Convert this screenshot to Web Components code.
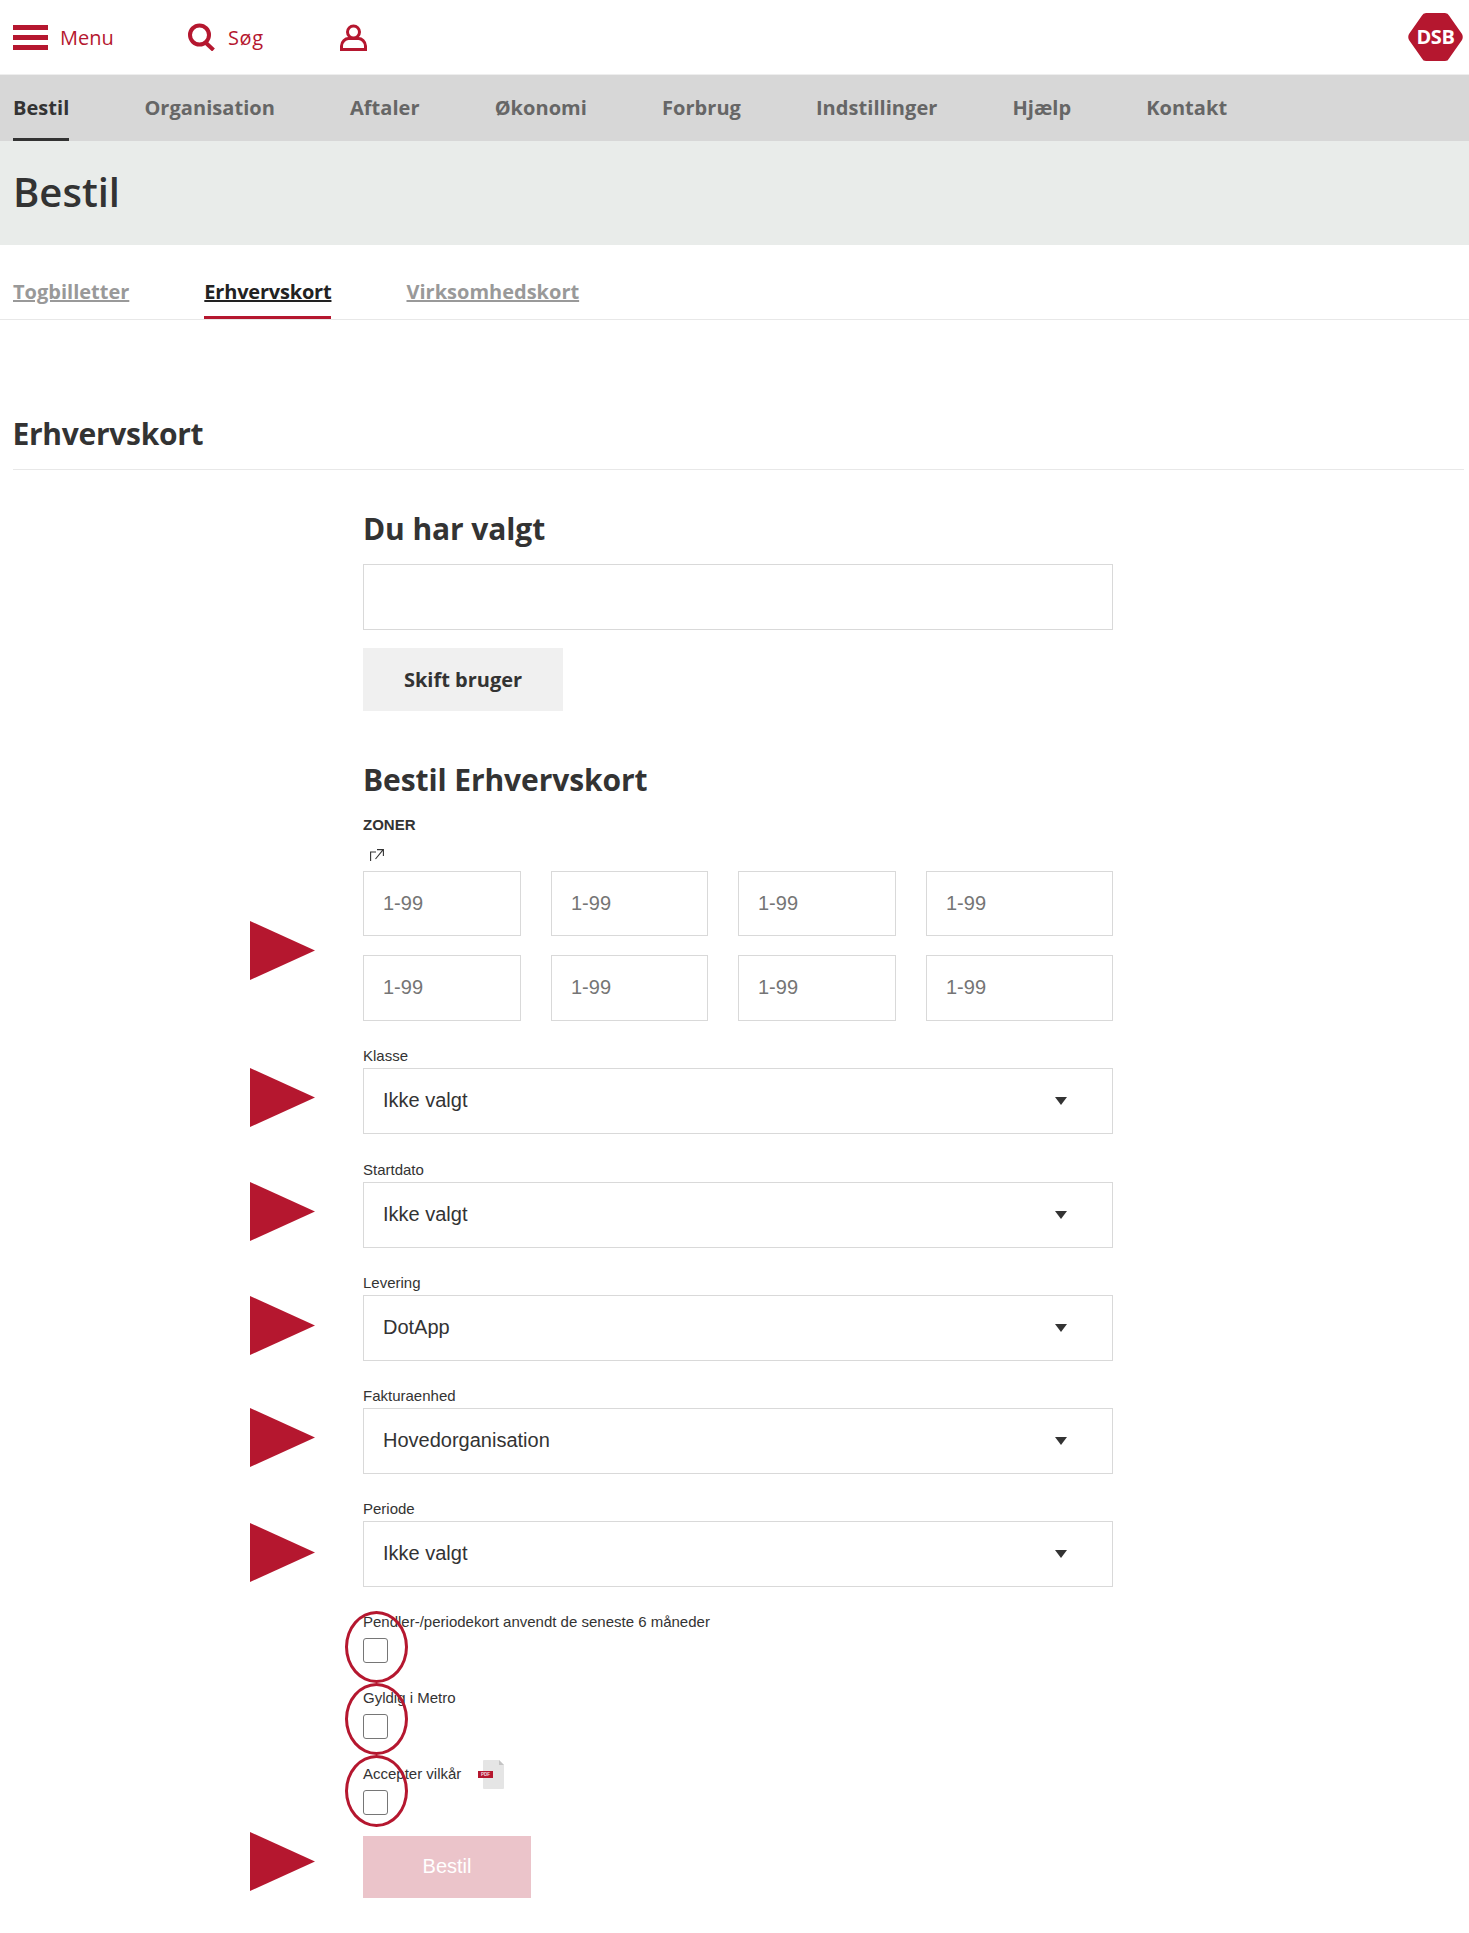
<!DOCTYPE html>
<html lang="da">
<head>
<meta charset="utf-8">
<title>Bestil</title>
<style>
  html, body { margin: 0; background: #fff; }
  body { font-family: "Liberation Sans", Arial, sans-serif; color: #333; }
</style>
</head>
<body>
<dsb-topbar></dsb-topbar>
<dsb-nav items="Bestil,Organisation,Aftaler,Økonomi,Forbrug,Indstillinger,Hjælp,Kontakt" active="Bestil"></dsb-nav>
<dsb-band>Bestil</dsb-band>
<dsb-tabs items="Togbilletter,Erhvervskort,Virksomhedskort" active="Erhvervskort"></dsb-tabs>
<dsb-order-page></dsb-order-page>

<script>
const HEADING_FONT = '"Open Sans", "Noto Sans", sans-serif';
const RED = '#b5172f';

class DsbTopbar extends HTMLElement {
  constructor() {
    super();
    this._root = this.attachShadow({mode: 'open'});
    this._root.innerHTML = `
      <style>
        :host { display: flex; align-items: center; height: 74px; padding: 0 6px 0 13px; color: ${RED}; font: 400 20px ${HEADING_FONT}; }
        .item { display: flex; align-items: center; }
        .menu { gap: 12px; width: 175px; }
        .search { gap: 13px; width: 153px; letter-spacing: .6px; }
        svg { display: block; }
        .user { margin-left: -1px; }
        .logo { margin-left: auto; margin-top: -1px; position: relative; width: 55px; height: 48px; }
        .logo span { position: absolute; inset: 0; display: flex; align-items: center; justify-content: center; color: #fff; font-weight: 700; font-size: 20px; letter-spacing: -.4px; }
      </style>
      <div class="item menu">
        <svg width="35" height="25" viewBox="0 0 35 25" fill="${RED}">
          <rect width="35" height="5"/><rect y="10" width="35" height="5"/><rect y="20" width="35" height="5"/>
        </svg>
        <span>Menu</span>
      </div>
      <div class="item search">
        <svg width="27" height="28" viewBox="0 0 27 28" fill="none" stroke="${RED}" stroke-width="4">
          <circle cx="11.5" cy="12" r="9.5"/><path d="M17.5 19.5 25.5 27"/>
        </svg>
        <span>Søg</span>
      </div>
      <svg class="user" width="27" height="27" viewBox="0 0 27 27" fill="none" stroke="${RED}" stroke-width="3">
        <circle cx="13.5" cy="8" r="6"/>
        <path d="M1.5 25.5v-3.500c0-4.500 4-7.500 7-7.500h10c3 0 7 3 7 7.500v3.500z"/>
      </svg>
      <div class="logo">
        <svg width="55" height="48" viewBox="0 0 55 48">
          <path d="M14 2.500Q15 0 18 0H37Q40 0 41 2.500L54 21Q55.500 24 54 27L41 45.500Q40 48 37 48H18Q15 48 14 45.500L1 27Q-.5 24 1 21z" fill="${RED}"/>
        </svg>
        <span>DSB</span>
      </div>
    `;
  }
}

class DsbNav extends HTMLElement {
  constructor() {
    super();
    const items = this.getAttribute('items').split(',');
    const active = this.getAttribute('active');
    this._root = this.attachShadow({mode: 'open'});
    this._root.innerHTML = `
      <style>
        :host { display: flex; gap: 75px; height: 66px; padding-left: 13px; background: #d7d7d7; border-top: 1px solid #eee; font: 700 20px ${HEADING_FONT}; letter-spacing: .05px; color: #666; }
        a { display: flex; align-items: center; box-sizing: border-box; height: 66px; padding-top: 1px; border-bottom: 3px solid transparent; }
        a.on { color: #333; border-bottom-color: #333; }
      </style>
      ${items.map(i => `<a class="${i === active ? 'on' : ''}">${i}</a>`).join('')}
    `;
  }
}

class DsbBand extends HTMLElement {
  constructor() {
    super();
    this._root = this.attachShadow({mode: 'open'});
    this._root.innerHTML = `
      <style>
        :host { display: flex; align-items: center; height: 104px; padding: 0 13px 4px; box-sizing: border-box; background: #e9ecea; color: #333; font: 600 40px ${HEADING_FONT}; }
      </style>
      <slot></slot>
    `;
  }
}

class DsbTabs extends HTMLElement {
  constructor() {
    super();
    const items = this.getAttribute('items').split(',');
    const active = this.getAttribute('active');
    this._root = this.attachShadow({mode: 'open'});
    this._root.innerHTML = `
      <style>
        :host { display: flex; gap: 75px; height: 75px; box-sizing: border-box; padding-left: 13px; border-bottom: 1px solid #e8e8e8; font: 700 20px ${HEADING_FONT}; color: #999; }
        a { display: flex; align-items: center; box-sizing: border-box; height: 74px; padding-top: 22px; text-decoration: underline; border-bottom: 3px solid transparent; }
        a.on { color: #222; letter-spacing: -.2px; border-bottom-color: ${RED}; }
      </style>
      ${items.map(i => `<a class="${i === active ? 'on' : ''}">${i}</a>`).join('')}
    `;
  }
}

// red triangle the screenshot's author drew next to a row
class DsbMarker extends HTMLElement {
  constructor() {
    super();
    this._root = this.attachShadow({mode: 'open'});
    this._root.innerHTML = `
      <style>
        :host { position: absolute; left: -113px; top: var(--top, 0); width: 65px; height: 59px; }
        svg { display: block; }
      </style>
      <svg width="65" height="59" viewBox="0 0 65 59"><path d="M0 0 65 29.500 0 59z" fill="${RED}"/></svg>
    `;
  }
}

class DsbZone extends HTMLElement {
  constructor() {
    super();
    this._root = this.attachShadow({mode: 'open'});
    this._root.innerHTML = `
      <style>
        :host { display: flex; align-items: center; box-sizing: border-box; padding: 0 0 1px 19px; border: 1.5px solid #d9d9d9; color: #757575; font-size: 20px; }
      </style>
      <slot></slot>
    `;
  }
}

class DsbSelect extends HTMLElement {
  constructor() {
    super();
    this._root = this.attachShadow({mode: 'open'});
    this._root.innerHTML = `
      <style>
        :host { display: block; position: relative; margin-bottom: 27px; }
        :host([first]) { margin-bottom: 28px; }
        label { display: block; height: 20px; font-size: 15px; line-height: 15px; }
        .box { display: flex; align-items: center; justify-content: space-between; box-sizing: border-box; height: 66px; padding: 0 45px 1px 19px; border: 1.5px solid #d9d9d9; font-size: 20px; }
        .arrow { width: 0; height: 0; border: 6.500px solid transparent; border-top: 8px solid #333; border-bottom: 0; }
      </style>
      <label>${this.getAttribute('label')}</label>
      <div class="box"><span>${this.getAttribute('value')}</span><i class="arrow"></i></div>
      <slot></slot>
    `;
  }
}

class DsbCheck extends HTMLElement {
  constructor() {
    super();
    this._root = this.attachShadow({mode: 'open'});
    this._root.innerHTML = `
      <style>
        :host { display: block; position: relative; margin-bottom: 28px; }
        label { display: block; height: 24px; font-size: 15px; line-height: 16px; }
        .box { box-sizing: border-box; width: 25px; height: 25px; margin-bottom: -1px; border: 1.5px solid #767676; border-radius: 3px; background: #fff; }
        .ring { position: absolute; left: -18px; top: var(--ring-top, -3px); box-sizing: border-box; width: 63px; height: 72px; border: 3.5px solid ${RED}; border-radius: 50%; }
        slot { display: inline-block; }
      </style>
      <label>${this.getAttribute('label')}<slot></slot></label>
      <div class="box"></div>
      <div class="ring"></div>
    `;
  }
}

class DsbPdfIcon extends HTMLElement {
  constructor() {
    super();
    this._root = this.attachShadow({mode: 'open'});
    this._root.innerHTML = `
      <style>
        :host { position: absolute; left: 115px; top: -6px; width: 26px; height: 29px; }
        svg { display: block; }
      </style>
      <svg width="26" height="29" viewBox="0 0 26 29">
        <path d="M5 1Q5 0 6 0H21L26 5V28Q26 29 25 29H6Q5 29 5 28z" fill="#e5e5e5"/>
        <path d="M21 0 26 5H21z" fill="#c4c4c4"/>
        <rect y="11" width="15" height="7" fill="${RED}"/>
        <text x="7.500" y="16" text-anchor="middle" font-size="4.500" font-weight="700" font-family="Liberation Sans" fill="#f5dde1">PDF</text>
      </svg>
    `;
  }
}

class DsbButton extends HTMLElement {
  constructor() {
    super();
    this._root = this.attachShadow({mode: 'open'});
    this._root.innerHTML = `
      <style>
        :host { display: flex; align-items: center; justify-content: center; box-sizing: border-box; }
        :host([kind="grey"]) { width: 200px; height: 63px; background: #f0f0f0; color: #333; font: 700 20px ${HEADING_FONT}; }
        :host([kind="primary"]) { position: relative; width: 168px; height: 62px; margin-top: -7px; padding-bottom: 2px; background: #ebc4ca; color: #fff; font-size: 20px; }
      </style>
      <slot></slot>
    `;
  }
}

class DsbOrderPage extends HTMLElement {
  constructor() {
    super();
    const zones = Array(8).fill('<dsb-zone>1-99</dsb-zone>').join('');
    this._root = this.attachShadow({mode: 'open'});
    this._root.innerHTML = `
      <style>
        :host { display: block; padding: 94px 5px 36px 13px; color: #333; }
        h2, h3 { margin: 0; font: 700 30px/40px ${HEADING_FONT}; }
        h2 { padding-bottom: 15px; border-bottom: 1px solid #e8e8e8; letter-spacing: -.3px; margin-left: -.5px; }
        h3 { letter-spacing: -.1px; }
        form { display: block; width: 750px; margin: 39px 0 0 350px; }
        .chosen { box-sizing: border-box; height: 66px; margin: 15px 0 18px; border: 1.5px solid #d9d9d9; }
        .second { margin-top: 49px; }
        .zoner { margin-top: 16px; font: 700 15px/18px "Liberation Sans", Arial, sans-serif; }
        .ext { display: block; margin: 15px 0 10px 7px; }
        .zones { position: relative; display: grid; grid-template-columns: 158px 157px 158px 1fr; grid-template-rows: 65px 66px; gap: 19px 30px; margin-bottom: 27px; }
      </style>
      <h2>Erhvervskort</h2>
      <form>
        <h3>Du har valgt</h3>
        <div class="chosen"></div>
        <dsb-button kind="grey">Skift bruger</dsb-button>
        <h3 class="second">Bestil Erhvervskort</h3>
        <div class="zoner">ZONER</div>
        <svg class="ext" width="14" height="12" viewBox="0 0 14 12" fill="none" stroke="#333" stroke-width="1.100">
          <path d="M6 3H.6V12"/><path d="M5.500 10 13 .8M7 .6h6.400V7"/>
        </svg>
        <div class="zones">${zones}<dsb-marker style="--top:50px"></dsb-marker></div>
        <dsb-select first label="Klasse" value="Ikke valgt"><dsb-marker style="--top:20px"></dsb-marker></dsb-select>
        <dsb-select label="Startdato" value="Ikke valgt"><dsb-marker style="--top:20px"></dsb-marker></dsb-select>
        <dsb-select label="Levering" value="DotApp"><dsb-marker style="--top:21px"></dsb-marker></dsb-select>
        <dsb-select label="Fakturaenhed" value="Hovedorganisation"><dsb-marker style="--top:20px"></dsb-marker></dsb-select>
        <dsb-select label="Periode" value="Ikke valgt"><dsb-marker style="--top:22px"></dsb-marker></dsb-select>
        <dsb-check style="--ring-top:-3px" label="Pendler-/periodekort anvendt de seneste 6 måneder"></dsb-check>
        <dsb-check style="--ring-top:-7px" label="Gyldig i Metro"></dsb-check>
        <dsb-check style="--ring-top:-11px" label="Accepter vilkår"><dsb-pdf-icon></dsb-pdf-icon></dsb-check>
        <dsb-button kind="primary">Bestil<dsb-marker style="--top:-4px"></dsb-marker></dsb-button>
      </form>
    `;
  }
}

window.customElements.define('dsb-topbar', DsbTopbar);
window.customElements.define('dsb-nav', DsbNav);
window.customElements.define('dsb-band', DsbBand);
window.customElements.define('dsb-tabs', DsbTabs);
window.customElements.define('dsb-marker', DsbMarker);
window.customElements.define('dsb-zone', DsbZone);
window.customElements.define('dsb-select', DsbSelect);
window.customElements.define('dsb-check', DsbCheck);
window.customElements.define('dsb-pdf-icon', DsbPdfIcon);
window.customElements.define('dsb-button', DsbButton);
window.customElements.define('dsb-order-page', DsbOrderPage);
</script>
</body>
</html>
